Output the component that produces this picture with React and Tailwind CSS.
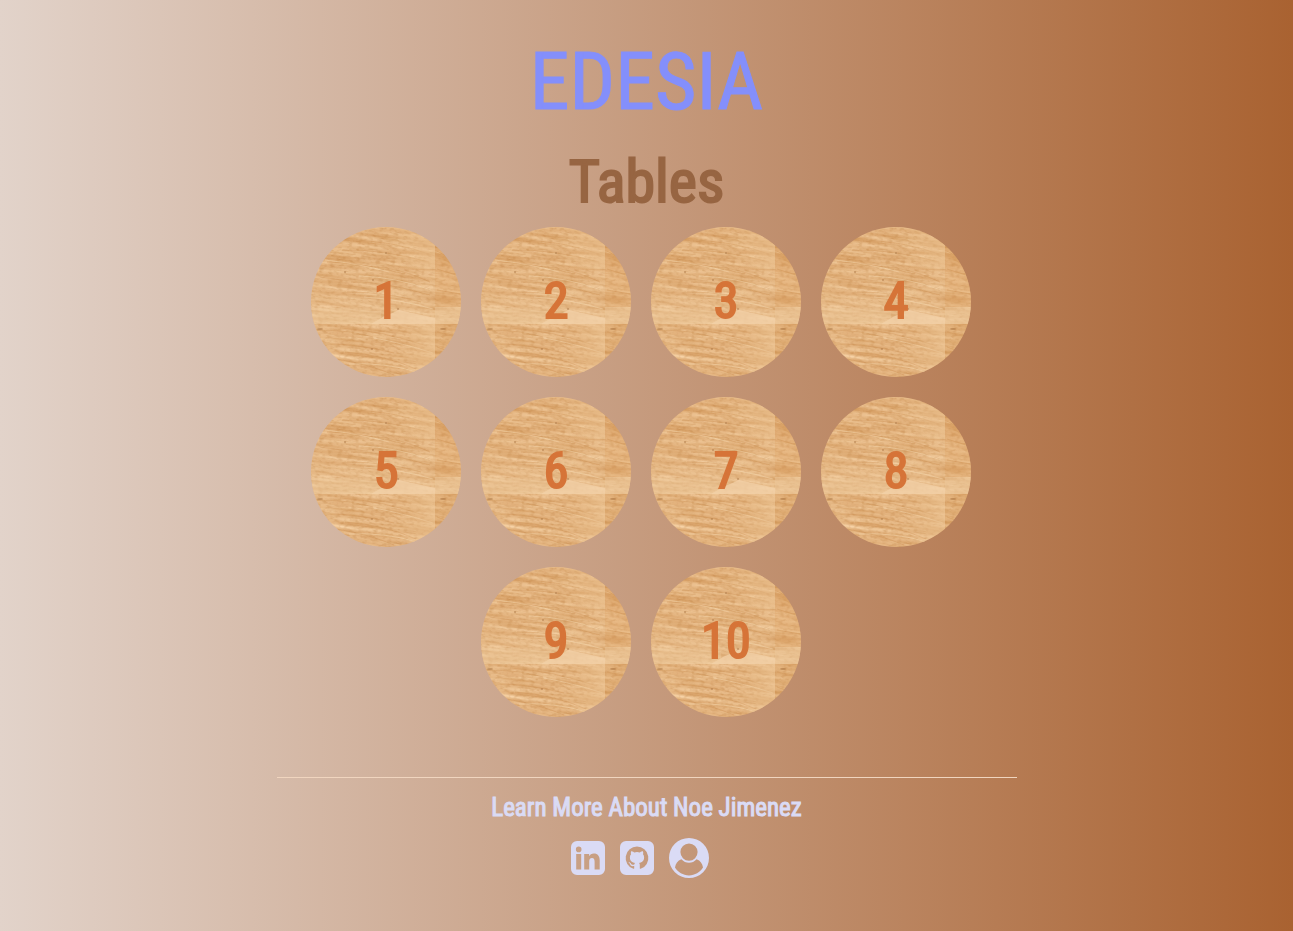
import React from "react";

const tables = [1, 2, 3, 4, 5, 6, 7, 8, 9, 10];

function WoodDefs() {
  return (
    <svg className="absolute h-0 w-0" aria-hidden="true">
      <defs>
        <filter id="grain" x="0" y="0" width="100%" height="100%" colorInterpolationFilters="sRGB">
          <feTurbulence type="fractalNoise" baseFrequency="0.02 0.24" numOctaves="5" seed="12" />
          <feColorMatrix values="0.13 0.08 0 0 0.79  0.22 0.12 0 0 0.54  0.28 0.16 0 0 0.285  0 0 0 0 1" />
        </filter>
        <filter id="speckle" x="0" y="0" width="100%" height="100%" colorInterpolationFilters="sRGB">
          <feTurbulence type="fractalNoise" baseFrequency="0.2 0.5" numOctaves="2" seed="3" />
          <feColorMatrix values="0 0 0 0 0.72  0 0 0 0 0.47  0 0 0 0 0.22  1.4 0 0 0 -0.65" />
        </filter>
        <linearGradient id="sheen" x1="0" y1="0" x2="0" y2="1">
          <stop offset="0" stopColor="#f3d3a8" stopOpacity="0" />
          <stop offset="0.6" stopColor="#f3d3a8" stopOpacity="0.15" />
          <stop offset="1" stopColor="#f3d3a8" stopOpacity="0.35" />
        </linearGradient>
        <linearGradient id="edge" x1="0" y1="0" x2="1" y2="0">
          <stop offset="0" stopColor="#edc594" stopOpacity="0" />
          <stop offset="1" stopColor="#edc594" stopOpacity="0.6" />
        </linearGradient>
        <clipPath id="disc">
          <circle cx="75" cy="75" r="75" />
        </clipPath>
        <symbol id="wood" viewBox="0 0 150 150">
          <g clipPath="url(#disc)">
            <g transform="rotate(7 75 75)">
              <rect x="-20" y="-20" width="190" height="190" filter="url(#grain)" />
              <rect x="-20" y="-20" width="190" height="190" filter="url(#speckle)" opacity=".7" />
            </g>
            <rect y="35" width="150" height="62" fill="url(#sheen)" />
            <path d="M88 83L106 87L124 91V97H60L72 90Z" fill="#f3d3ab" opacity=".7" />
            <path d="M0 82C24 78 44 84 70 84V97H0Z" fill="#f3d2a7" opacity=".25" />
            <path d="M124 80H150V97H124Z" fill="#f3d2a7" opacity=".3" />
            <g fill="none" stroke="#c98b4d" strokeWidth=".8" opacity=".45">
              <path d="M42 14Q76 12 124 29M31 23Q70 22 118 35M16 35Q52 36 94 47M60 39Q92 42 119 55M40 55Q70 54 119 68M36 65Q76 65 110 75" />
              <path d="M5 103Q39 103 62 110M29 101Q72 104 116 119M8 117Q44 116 83 126M34 125Q74 128 105 142M26 132Q60 138 83 148" />
              <path d="M126 24L135 29M126 42L145 48M126 63L149 67M126 105L147 109M126 120L137 124" />
            </g>
            <g fill="none" stroke="#f8dcb6" strokeWidth=".8" opacity=".55">
              <path d="M14 33Q50 37 78 45M48 49Q85 50 120 63M53 70Q88 72 122 82M63 111Q91 116 122 126M38 137Q73 135 106 145" />
            </g>
            <rect x="84" y="0" width="40" height="42" fill="url(#edge)" />
            <rect x="84" y="97" width="40" height="53" fill="url(#edge)" />
            <rect x="124" y="0" width="26" height="80" fill="#d98e45" opacity=".15" />
            <rect x="124" y="97" width="26" height="53" fill="#ce8a44" opacity=".18" />
            <g fill="#a97543" opacity=".55">
              <circle cx="75" cy="26" r="1" />
              <circle cx="34" cy="45" r="1" />
              <circle cx="62" cy="53" r="1" />
              <circle cx="87" cy="82" r="1" />
              <circle cx="61" cy="122" r="1" />
              <ellipse cx="9" cy="102" rx="3" ry="1" />
              <ellipse cx="132" cy="102" rx="3" ry="1" />
            </g>
          </g>
        </symbol>
      </defs>
    </svg>
  );
}

function TableButton({ number }) {
  return (
    <button
      type="button"
      className="relative flex size-[150px] cursor-pointer items-center justify-center rounded-full pb-0.5 text-[50px] font-normal leading-none text-[#d67438] [-webkit-text-stroke:2px]"
    >
      <svg className="absolute inset-0 size-full" aria-hidden="true">
        <use href="#wood" />
      </svg>
      <span className="relative">{number}</span>
    </button>
  );
}

function LinkedInIcon() {
  return (
    <svg viewBox="0 0 34 34" className="size-[34px]" fill="currentColor" aria-hidden="true">
      <path
        fillRule="evenodd"
        d="M6 0H28A6 6 0 0 1 34 6V28A6 6 0 0 1 28 34H6A6 6 0 0 1 0 28V6A6 6 0 0 1 6 0ZM7.7 5.6A2.8 2.8 0 1 0 7.7 11.2A2.8 2.8 0 1 0 7.7 5.6ZM5.2 13V28.5H10.2V13ZM13.2 13V28.5H18.2V20.6C18.2 18.3 19 17 21 17C23 17 23.6 18.5 23.6 20.7V28.5H28.7V19.6C28.7 15.3 26.8 12.6 22.9 12.6C20.5 12.6 18.9 13.8 18.1 15.3V13Z"
      />
    </svg>
  );
}

function GitHubIcon() {
  return (
    <svg viewBox="0 0 34 34" className="size-[34px]" fill="currentColor" aria-hidden="true">
      <path
        fillRule="evenodd"
        d="M6 0H28A6 6 0 0 1 34 6V28A6 6 0 0 1 28 34H6A6 6 0 0 1 0 28V6A6 6 0 0 1 6 0ZM17 5.6A11.4 11.4 0 0 0 13.4 27.8C14 27.9 14.2 27.6 14.2 27.2V25.1C11 25.8 10.3 23.7 10.3 23.7C9.8 22.3 9 22 9 22C8 21.3 9.1 21.3 9.1 21.3C10.3 21.4 10.9 22.5 10.9 22.5C11.9 24.3 13.6 23.8 14.3 23.5C14.4 22.7 14.7 22.2 15.1 21.9C12.5 21.6 9.9 20.6 9.9 16.3C9.9 15 10.3 14 11.1 13.2C10.9 12.9 10.6 11.7 11.2 10.2C11.2 10.2 12.1 9.9 14.3 11.4A10.8 10.8 0 0 1 19.8 11.4C21.9 9.9 22.9 10.2 22.9 10.2C23.5 11.7 23.1 12.9 23 13.2C23.7 14 24.1 15 24.1 16.3C24.1 20.6 21.5 21.6 19 21.9C19.4 22.2 19.8 22.9 19.8 24V27.2C19.8 27.6 20 27.9 20.6 27.8A11.4 11.4 0 0 0 17 5.6Z"
      />
    </svg>
  );
}

function PersonIcon() {
  return (
    <svg viewBox="0 0 40 40" className="size-10" fill="currentColor" aria-hidden="true">
      <path
        fillRule="evenodd"
        d="M20 0A20 20 0 1 1 20 40A20 20 0 1 1 20 0ZM20 5.5A8.6 8.6 0 1 0 20 22.7A8.6 8.6 0 1 0 20 5.5ZM12.4 21.2C8.6 22.6 6.6 25.6 6 29.6C9 34.4 14 37.4 20 37.4C26 37.4 31 34.4 34 29.6C33.4 25.6 31.4 22.6 27.6 21.2C25.4 23.6 22.9 24.8 20 24.8C17.1 24.8 14.6 23.6 12.4 21.2Z"
      />
    </svg>
  );
}

const links = [
  { label: "LinkedIn", href: "#linkedin", Icon: LinkedInIcon },
  { label: "GitHub", href: "#github", Icon: GitHubIcon },
  { label: "Portfolio", href: "#portfolio", Icon: PersonIcon },
];

export default function App() {
  return (
    <div className="flex min-h-screen flex-col items-center bg-linear-to-r/srgb from-[#e2d3ca] to-[#a96231] pt-8 font-['Roboto_Condensed','Roboto',sans-serif]">
      <WoodDefs />
      <h1 className="pt-1 text-[80px] font-normal leading-[92px] text-[#848ffb] [-webkit-text-stroke:1px]">EDESIA</h1>
      <main className="flex w-full flex-col items-center pt-4">
        <h2 className="text-[60px] font-normal leading-[76px] text-[#976542] [-webkit-text-stroke:2px]">Tables</h2>
        <div className="flex w-full max-w-[740px] flex-wrap justify-center gap-5 pr-[11px] pt-[7px]">
          {tables.map((n) => (
            <TableButton key={n} number={n} />
          ))}
        </div>
      </main>
      <footer className="mt-15 flex w-full max-w-[740px] flex-col items-center border-t border-[#f0d5bf] pt-3 text-[#dadbf5]">
        <p className="text-[25px] font-normal leading-9 [-webkit-text-stroke:1px]">Learn More About Noe Jimenez</p>
        <nav className="flex items-center gap-[15px] pr-[13px] pt-3">
          {links.map(({ label, href, Icon }) => (
            <a key={label} href={href} aria-label={label}>
              <Icon />
            </a>
          ))}
        </nav>
      </footer>
    </div>
  );
}
